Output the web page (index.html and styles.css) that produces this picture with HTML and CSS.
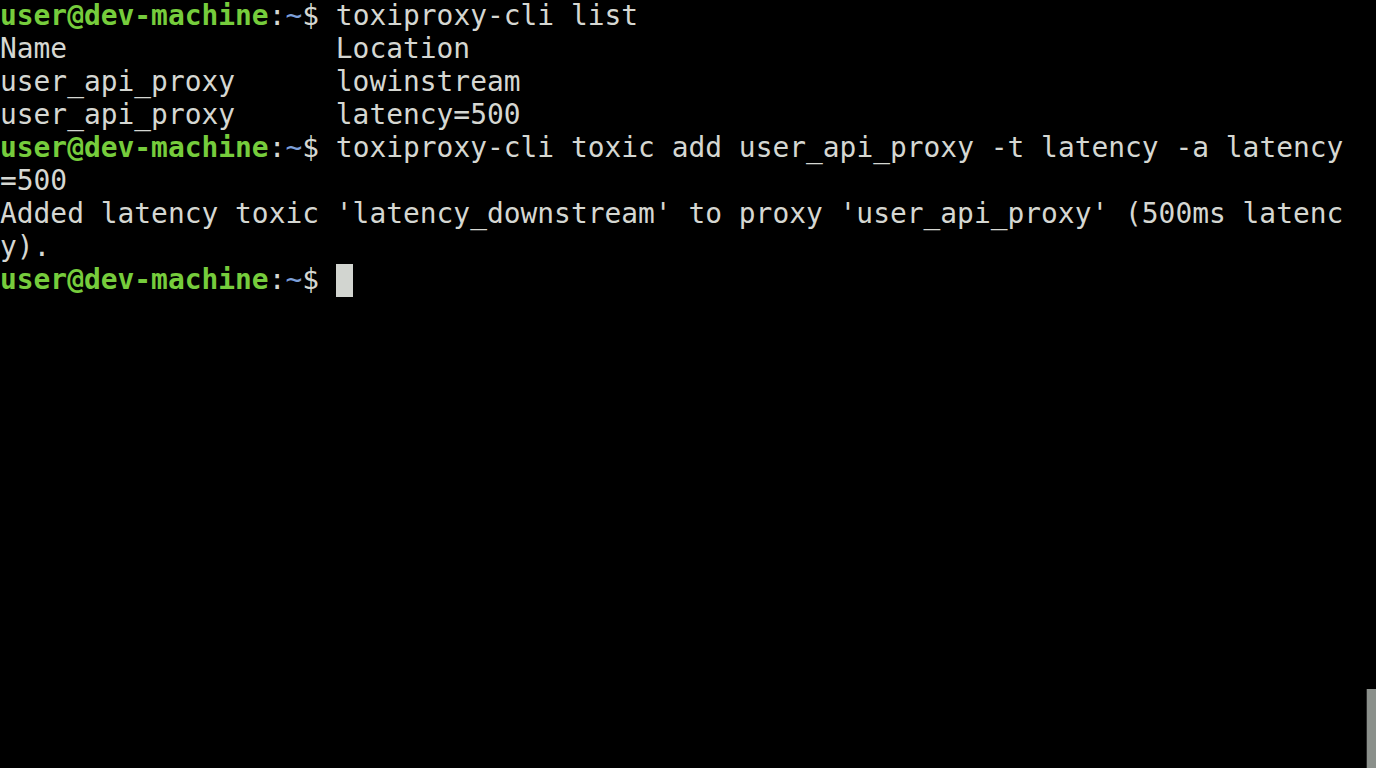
FILE: index.html
```html
<!DOCTYPE html>
<html lang="en">
<head>
    <meta charset="UTF-8">
    <meta name="viewport" content="width=device-width, initial-scale=1.0">
    <title>Terminal</title>
    <link rel="stylesheet" href="styles.css">
</head>
<body>

    <div class="terminal">
        <div class="screen">
            <div class="line"><span class="user">user@dev-machine</span>:<span class="path">~</span>$ toxiproxy-cli list</div>
            <div class="line">Name                Location</div>
            <div class="line">user_api_proxy      lowinstream</div>
            <div class="line">user_api_proxy      latency=500</div>
            <div class="line"><span class="user">user@dev-machine</span>:<span class="path">~</span>$ toxiproxy-cli toxic add user_api_proxy -t latency -a latency</div>
            <div class="line">=500</div>
            <div class="line">Added latency toxic 'latency_downstream' to proxy 'user_api_proxy' (500ms latenc</div>
            <div class="line">y).</div>
            <div class="line"><span class="user">user@dev-machine</span>:<span class="path">~</span>$ <span class="cursor"> </span></div>
        </div>

        <!-- scrollbar thumb, overlays the output -->
        <div class="scroll-thumb"></div>
    </div>

</body>
</html>
```

FILE: styles.css
```css
html, body {
    margin: 0;
    height: 100%;
    background-color: #000;
}
.terminal {
    position: relative;
    height: 768px;
    overflow: hidden;
    background-color: #000;
}
.screen {
    font-family: "DejaVu Sans Mono", "Liberation Mono", monospace;
    font-size: 27.9px;
    line-height: 33px;
    color: #d5d7d2;
    margin-top: -1px;
}
.line {
    white-space: pre;
    height: 33px;
}
.user {
    color: #76cc3c;
    font-weight: bold;
}
.path {
    color: #7c9fd8;
}
.cursor {
    display: inline-block;
    width: 17px;
    height: 33px;
    margin-top: 1px;
    vertical-align: top;
    background-color: #d2d5d0;
}
.scroll-thumb {
    position: absolute;
    right: 0;
    bottom: 0;
    width: 9px;
    height: 79px;
    background-color: #8b908b;
    border-left: 1px solid #2a2a2a;
}
```
